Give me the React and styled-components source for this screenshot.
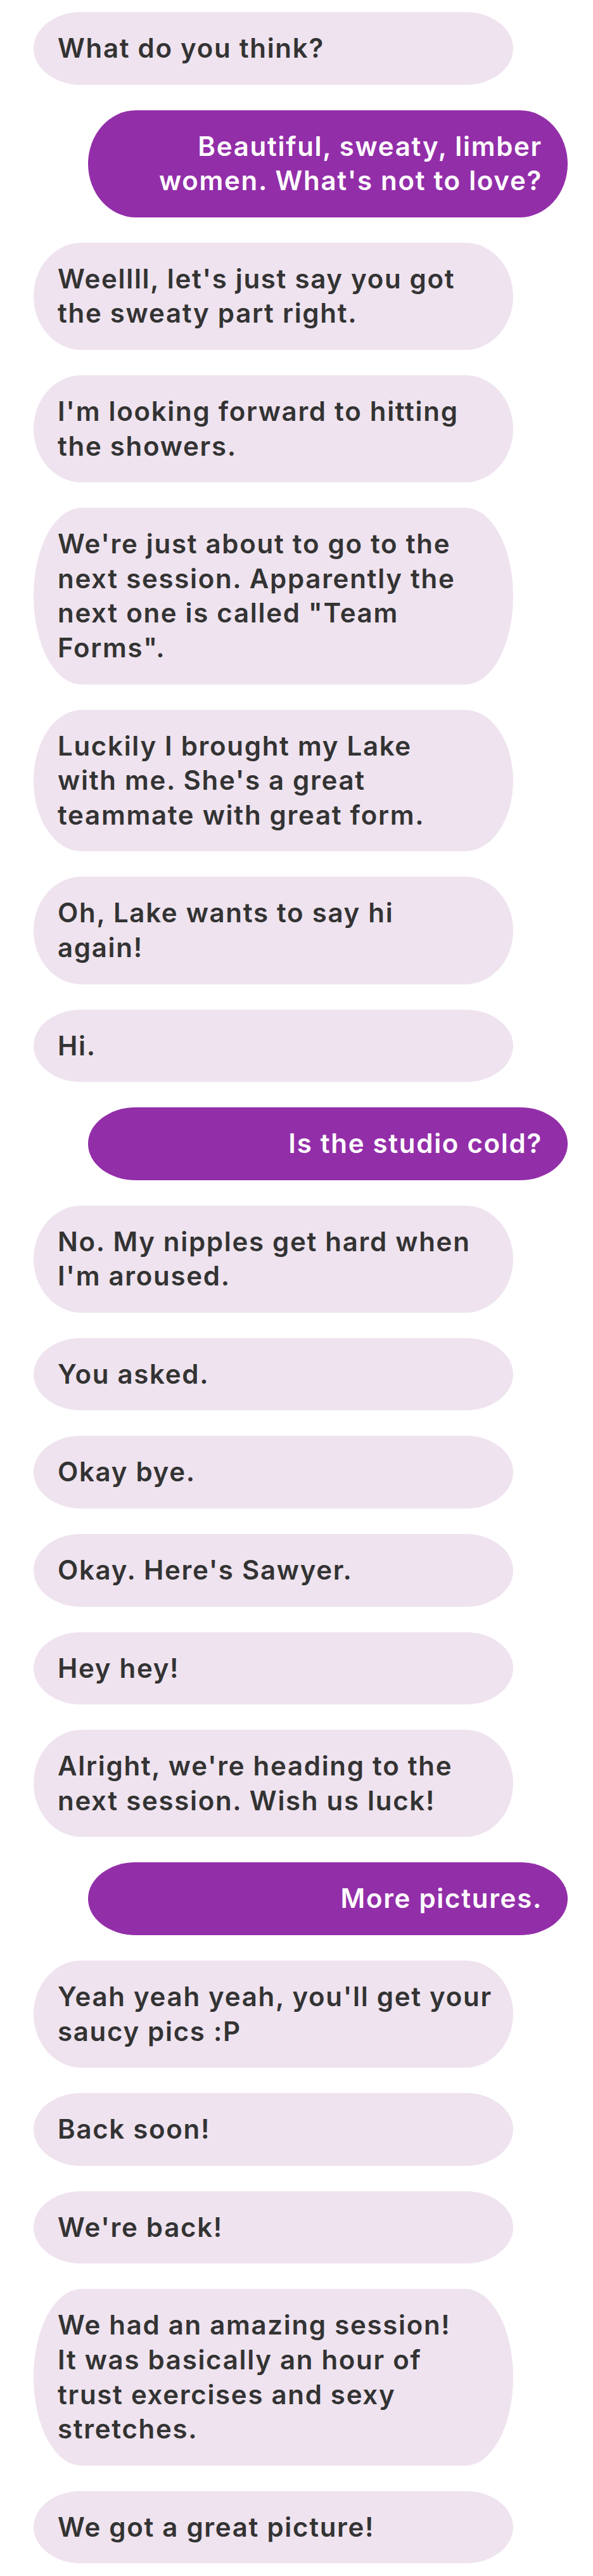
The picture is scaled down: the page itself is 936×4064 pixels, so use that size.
import React from "react";
import styled, { createGlobalStyle } from "styled-components";

const GlobalStyle = createGlobalStyle`
  html, body {
    margin: 0;
    padding: 0;
    background: #ffffff;
  }
  body {
    font-family: Inter, "Noto Sans", "Liberation Sans", sans-serif;
  }
`;

const Thread = styled.main`
  display: flex;
  flex-direction: column;
  gap: 40px;
  padding: 19px 40px 17px 53px;
`;

const Bubble = styled.div`
  box-sizing: border-box;
  width: 757px;
  padding: 30px 40px 30px 38px;
  border-radius: 10% / 50%;
  font-size: 42px;
  line-height: 54.6px;
  font-weight: 600;
  letter-spacing: 1.7px;
  align-self: ${(p) => (p.$mine ? "flex-end" : "flex-start")};
  text-align: ${(p) => (p.$mine ? "right" : "left")};
  background: ${(p) => (p.$mine ? "#932ea9" : "#efe3ef")};
  color: ${(p) => (p.$mine ? "#ffffff" : "#333333")};
`;

const Line = styled.span`
  display: block;
  white-space: nowrap;
`;

const messages = [
  { lines: ["What do you think?"] },
  { lines: ["Beautiful, sweaty, limber", "women. What's not to love?"], mine: true },
  { lines: ["Weellll, let's just say you got", "the sweaty part right."] },
  { lines: ["I'm looking forward to hitting", "the showers."] },
  { lines: ["We're just about to go to the", "next session. Apparently the", "next one is called \"Team", "Forms\"."] },
  { lines: ["Luckily I brought my Lake", "with me. She's a great", "teammate with great form."] },
  { lines: ["Oh, Lake wants to say hi", "again!"] },
  { lines: ["Hi."] },
  { lines: ["Is the studio cold?"], mine: true },
  { lines: ["No. My nipples get hard when", "I'm aroused."] },
  { lines: ["You asked."] },
  { lines: ["Okay bye."] },
  { lines: ["Okay. Here's Sawyer."] },
  { lines: ["Hey hey!"] },
  { lines: ["Alright, we're heading to the", "next session. Wish us luck!"] },
  { lines: ["More pictures."], mine: true },
  { lines: ["Yeah yeah yeah, you'll get your", "saucy pics :P"] },
  { lines: ["Back soon!"] },
  { lines: ["We're back!"] },
  { lines: ["We had an amazing session!", "It was basically an hour of", "trust exercises and sexy", "stretches."] },
  { lines: ["We got a great picture!"] },
];

export default function App() {
  return (
    <>
      <GlobalStyle />
      <Thread>
        {messages.map((m, i) => (
          <Bubble key={i} $mine={m.mine}>
            {m.lines.map((l, j) => (
              <Line key={j}>{l}</Line>
            ))}
          </Bubble>
        ))}
      </Thread>
    </>
  );
}
